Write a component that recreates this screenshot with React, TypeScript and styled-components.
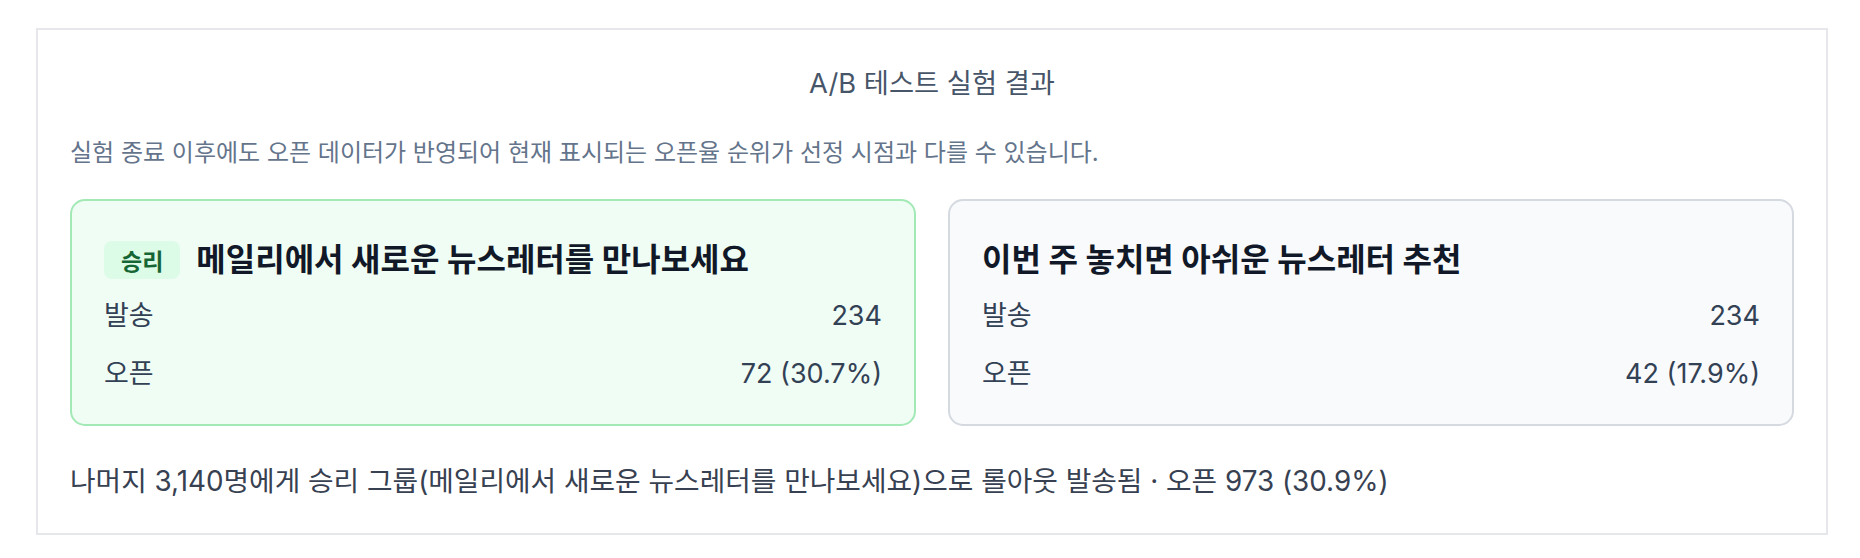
import styled, { createGlobalStyle } from "styled-components";

const GlobalStyle = createGlobalStyle`
  body {
    margin: 0;
    background: #ffffff;
    font-family: Inter, "Noto Sans CJK KR", sans-serif;
  }
`;

const Page = styled.div`
  padding: 28px 32px 0 36px;
`;

const Panel = styled.section`
  border: 2px solid #e5e7eb;
  padding: 32px;
  display: flex;
  flex-direction: column;
`;

const Heading = styled.h2`
  margin: 0 0 30px;
  text-align: center;
  font-size: 27.3px;
  line-height: 44px;
  font-weight: 400;
  color: #475569;
`;

const Notice = styled.p`
  margin: 0 0 30px;
  font-size: 24px;
  line-height: 33px;
  color: #64748b;
`;

const Variants = styled.div`
  display: grid;
  grid-template-columns: 1fr 1fr;
  gap: 32px;
`;

const Card = styled.div<{ $winner?: boolean }>`
  border: 2px solid ${(p) => (p.$winner ? "#a3e9b6" : "#d5d9e0")};
  background: ${(p) => (p.$winner ? "#f0fdf4" : "#f8fafc")};
  border-radius: 15px;
  padding: 36px 32px 21px;
  display: flex;
  flex-direction: column;
`;

const CardHeader = styled.div`
  display: flex;
  align-items: center;
  gap: 16px;
  height: 46px;
  margin-bottom: 4px;
`;

const Badge = styled.span`
  display: inline-flex;
  align-items: center;
  justify-content: center;
  height: 38px;
  padding: 0 17px;
  border-radius: 8px;
  background: #dcfce7;
  color: #166534;
  font-size: 23px;
  font-weight: 700;
`;

const CardTitle = styled.h3`
  margin: 0;
  font-size: 32px;
  line-height: 46px;
  font-weight: 700;
  color: #111827;
`;

const Stat = styled.div`
  display: flex;
  justify-content: space-between;
  align-items: center;
  padding: 12px 0;
  font-size: 27px;
  line-height: 34px;
  color: #334155;
`;

const Rollout = styled.p`
  margin: 36px 0 0;
  font-size: 27.8px;
  line-height: 39px;
  color: #374151;
`;

type Variant = {
  title: string;
  sent: string;
  open: string;
  winner?: boolean;
};

const variants: Variant[] = [
  { title: "메일리에서 새로운 뉴스레터를 만나보세요", sent: "234", open: "72 (30.7%)", winner: true },
  { title: "이번 주 놓치면 아쉬운 뉴스레터 추천", sent: "234", open: "42 (17.9%)" },
];

export default function App() {
  return (
    <Page>
      <GlobalStyle />
      <Panel>
        <Heading>A/B 테스트 실험 결과</Heading>
        <Notice>
          실험 종료 이후에도 오픈 데이터가 반영되어 현재 표시되는 오픈율 순위가 선정 시점과 다를 수 있습니다.
        </Notice>
        <Variants>
          {variants.map((v) => (
            <Card key={v.title} $winner={v.winner}>
              <CardHeader>
                {v.winner && <Badge>승리</Badge>}
                <CardTitle>{v.title}</CardTitle>
              </CardHeader>
              <Stat>
                <span>발송</span>
                <span>{v.sent}</span>
              </Stat>
              <Stat>
                <span>오픈</span>
                <span>{v.open}</span>
              </Stat>
            </Card>
          ))}
        </Variants>
        <Rollout>
          나머지 3,140명에게 승리 그룹(메일리에서 새로운 뉴스레터를 만나보세요)으로 롤아웃 발송됨 · 오픈 973 (30.9%)
        </Rollout>
      </Panel>
    </Page>
  );
}
